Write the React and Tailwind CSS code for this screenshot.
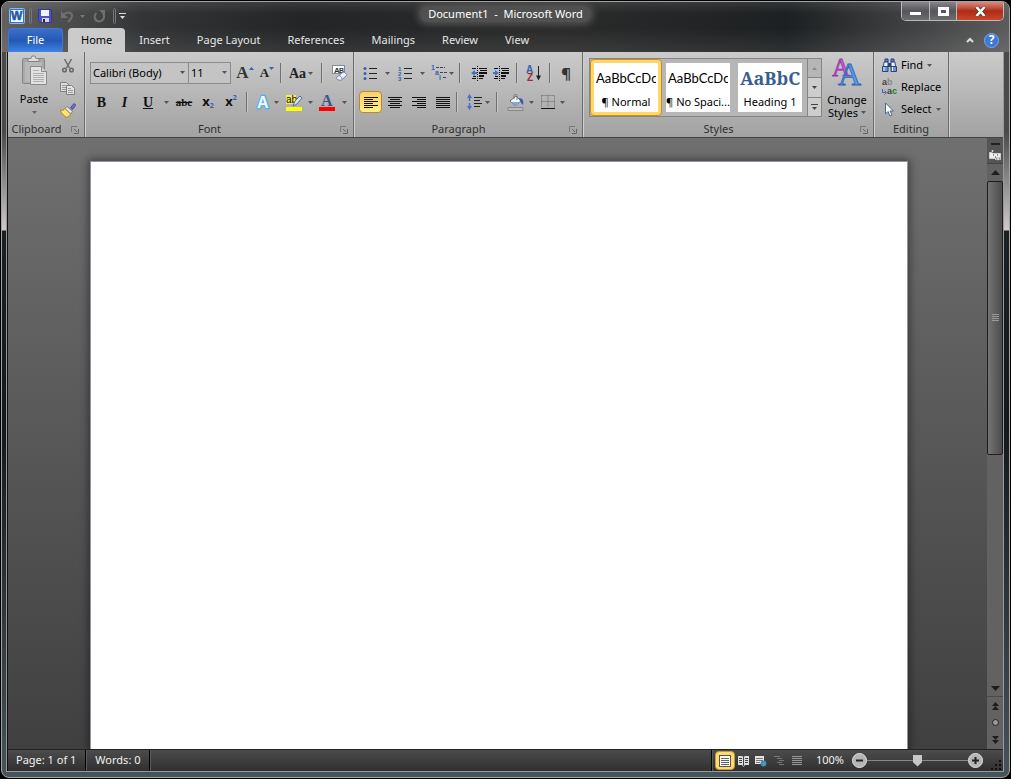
import { useState } from 'react';

const TABS = ['Home', 'Insert', 'Page Layout', 'References', 'Mailings', 'Review', 'View'];

function Caret({ className = '' }) {
  return (
    <svg viewBox="0 0 5 3" className={`h-[3px] w-[5px] shrink-0 ${className}`} aria-hidden="true">
      <path d="M0 0h5L2.5 3z" fill="currentColor" />
    </svg>
  );
}

function Sep({ className = '' }) {
  return <span className={`h-5 w-0.5 shrink-0 border-l border-[#6f6f6f] border-r border-r-[#c9c9c9] ${className}`} />;
}

function Tool({ label, className = '', children, ...rest }) {
  return (
    <button
      type="button"
      aria-label={label}
      title={label}
      className={`flex h-[22px] shrink-0 items-center justify-center rounded-sm hover:bg-[#ffe08a] ${className}`}
      {...rest}
    >
      {children}
    </button>
  );
}

function Icon({ w = 16, h = 16, children }) {
  return (
    <svg width={w} height={h} viewBox={`0 0 ${w} ${h}`} fill="none" className="shrink-0" aria-hidden="true">
      {children}
    </svg>
  );
}

function Group({ label, launcher = true, className = '', children }) {
  return (
    <section
      aria-label={label}
      className={`flex shrink-0 flex-col border-r border-[#6c6c6c] shadow-[1px_0_0_#cfcfcf] ${className}`}
    >
      <div className="flex-1">{children}</div>
      <div className="flex h-4 items-center text-[#2f2f2f]">
        <span className={`flex-1 text-center ${launcher ? 'pr-1.5' : ''}`}>{label}</span>
        {launcher ? (
          <button type="button" aria-label={`${label} options`} className="mr-[5px] mt-0.5">
            <Icon w={8} h={8}>
              <path d="M.5 6V.5H6" stroke="#777" />
              <path d="M3 3l3 3M7.5 3v4.5H3" stroke="#666" />
            </Icon>
          </button>
        ) : null}
      </div>
    </section>
  );
}

function Combo({ label, options, className }) {
  return (
    <div className={`relative shrink-0 ${className}`}>
      <select
        aria-label={label}
        className="h-[22px] w-full appearance-none border border-[#8b8b8b] bg-[#c4c4c4] pl-0.5 pr-3 text-[11px] text-black"
      >
        {options.map((item) => (
          <option key={item}>{item}</option>
        ))}
      </select>
      <Caret className="pointer-events-none absolute right-1 top-[9px] text-[#555]" />
    </div>
  );
}

function Lines({ rows, w = 14 }) {
  return (
    <Icon w={w} h={13}>
      {rows.map(([x, len], i) => (
        <path key={i} d={`M${x} ${i * 2 + 1.5}h${len}`} stroke="#111" />
      ))}
    </Icon>
  );
}

function IndentIcon({ out }) {
  return (
    <Icon w={16} h={15}>
      <path d="M1 2.5h4M8 2.500h8M9 4.500h7M1 12.500h4M8 12.500h4M2 10.500h3" stroke="#111" />
      <path d="M8 7h8M8 10h5" stroke="#111" strokeWidth="2" />
      <path d="M6.500 0v15" stroke="#111" strokeDasharray="1 1" />
      <path d={out ? 'M0 7l4-3v2h2v2H4v2z' : 'M6 7L2 4v2H0v2h2v2z'} fill="#3b74cf" />
    </Icon>
  );
}

function Clipboard() {
  return (
    <Group label="Clipboard" className="w-[77px]">
      <div className="flex pt-[3px]">
        <button type="button" className="flex w-[52px] flex-col items-center text-black">
          <Icon w={27} h={32}>
            <rect x="1.5" y="3.5" width="22" height="25" rx="1" fill="#a9a9a9" stroke="#868686" />
            <path d="M4 7h17v20H4z" fill="#b9b9b9" />
            <path d="M7 6.5V3.5h3L11 1h3l1 2.500h3v3z" fill="#dcdcdc" stroke="#858585" />
            <path d="M9.500 11.500h11l5 5v13h-16z" fill="#e2e2e2" stroke="#8a8a8a" />
            <path d="M20.500 11.500v5h5" fill="#cfcfcf" stroke="#8a8a8a" />
            <path d="M12 15.500h6M12 18.500h11M12 20.500h11M12 22.500h11M12 24.500h11M12 26.500h11" stroke="#b0b0b0" />
          </Icon>
          <span className="mt-1 leading-4">Paste</span>
          <Caret className="mt-1 text-[#666]" />
        </button>
        <div className="flex flex-col">
          <Tool label="Cut" className="w-4">
            <Icon w={12} h={14}>
              <path d="M2.500 0l5 9M9.500 0l-5 9" stroke="#6c6c6c" strokeWidth="1.500" />
              <circle cx="2.500" cy="11" r="1.800" stroke="#666" strokeWidth="1.500" />
              <circle cx="9.500" cy="11" r="1.800" stroke="#666" strokeWidth="1.500" />
            </Icon>
          </Tool>
          <Tool label="Copy" className="w-4">
            <Icon w={16} h={13}>
              <path d="M.5.5h6l3 3v6h-9z" fill="#ddd" stroke="#808080" />
              <path d="M2 3.500h4M2 5.500h5M2 7.500h4" stroke="#999" />
              <path d="M6.500 3.500h5l3 3v6h-8z" fill="#e4e4e4" stroke="#808080" />
              <path d="M8 6.500h3M8 8.500h5M8 10.500h5" stroke="#999" />
            </Icon>
          </Tool>
          <Tool label="Format Painter" className="w-4">
            <Icon w={16} h={15}>
              <path d="M10.500 5L13 1.500c1-1.500 3-.5 2.500 1L12.500 6.500z" fill="#6a6cd8" stroke="#3f3f93" strokeWidth=".8" />
              <path d="M7 3.500l5.500 5-2 2.500L5 5.500z" fill="#e8e8e8" stroke="#666" strokeWidth=".8" />
              <path d="M5 5.500C4 7 2 7.500 0 7.500c2 3 4 6 7 7 2-1 3-2 3.500-3.500z" fill="#f5dc5a" stroke="#9d7d1c" strokeWidth=".8" />
              <path d="M2.500 8.500l4.500 4M5 7.500l4 4" stroke="#fff6b5" />
            </Icon>
          </Tool>
        </div>
      </div>
    </Group>
  );
}

function FontGroup() {
  return (
    <Group label="Font" className="w-[269px]">
      <div className="mt-2.5 flex h-[22px] items-center pl-[5px]">
        <Combo label="Font" options={['Calibri (Body)', 'Cambria', 'Arial']} className="w-[99px]" />
        <Combo label="Font Size" options={['11', '12', '14']} className="-ml-px w-[43px]" />
        <Tool label="Grow Font" className="ml-[3px] w-[22px] font-['Liberation_Serif'] text-[17px] font-bold text-[#333]">
          A
          <Caret className="mb-2.5 rotate-180 text-[#2f62b5]" />
        </Tool>
        <Tool label="Shrink Font" className="w-[22px] font-['Liberation_Serif'] text-[13px] font-bold text-[#222]">
          A
          <Caret className="mb-2.5 text-[#2f62b5]" />
        </Tool>
        <Sep className="ml-0.5 mr-[3px]" />
        <Tool label="Change Case" className="w-8 gap-0.5 font-['Liberation_Serif'] text-[14px] font-bold text-[#222]">
          Aa
          <Caret className="text-[#555]" />
        </Tool>
        <Sep className="mx-1" />
        <Tool label="Clear Formatting" className="w-6">
          <Icon w={17} h={16}>
            <rect x="1.500" y=".5" width="12" height="8" fill="#fff" stroke="#7c8ba3" />
            <text x="3" y="7.500" fontSize="8" fontWeight="bold" fill="#333" fontFamily="Liberation Sans">A</text>
            <text x="8" y="7.500" fontSize="7" fontWeight="bold" fill="#333" fontFamily="Liberation Sans">B</text>
            <path d="M5.500 12.500l6-5c1-1 5 1 4 3l-5 4.500c-2 1-6-1-5-2.500z" fill="#eef1fb" stroke="#7082a8" />
            <path d="M8 10.500c1 0 3 1.500 3 3.500" stroke="#7082a8" />
          </Icon>
        </Tool>
      </div>
      <div className="mt-[7px] flex h-[22px] items-center pl-[5px] text-[#111]">
        <Tool label="Bold" className="w-[23px] font-['Liberation_Serif'] text-[14px] font-bold">B</Tool>
        <Tool label="Italic" className="w-[23px] font-['Liberation_Serif'] text-[14px] font-bold italic">I</Tool>
        <Tool label="Underline" className="w-6 font-['Liberation_Serif'] text-[14px] font-bold underline">U</Tool>
        <Tool label="Underline Style" className="w-3 text-[#555]">
          <Caret />
        </Tool>
        <Tool label="Strikethrough" className="w-6 font-['Liberation_Serif'] text-[11px] font-bold line-through">abc</Tool>
        <Tool label="Subscript" className="w-6 text-[13px] font-bold">
          x<span className="mt-2 text-[7px] text-[#2f62b5]">2</span>
        </Tool>
        <Tool label="Superscript" className="w-[22px] text-[13px] font-bold">
          x<span className="mb-2 text-[7px] text-[#2f62b5]">2</span>
        </Tool>
        <Sep className="ml-1 mr-[7px]" />
        <Tool label="Text Effects" className="w-6 gap-1">
          <Icon w={14} h={16}>
            <text
              x="1"
              y="14"
              fontSize="16"
              fontWeight="bold"
              fontFamily="Liberation Sans"
              fill="#eefaff"
              stroke="#5fb0e2"
              strokeWidth="3"
              strokeLinejoin="round"
              paintOrder="stroke"
            >
              A
            </text>
          </Icon>
          <Caret className="text-[#555]" />
        </Tool>
        <Tool label="Text Highlight Color" className="ml-1 w-8 gap-[5px]">
          <Icon w={17} h={17}>
            <path d="M0 1h10v9H0z" fill="#f4ec58" />
            <path d="M0 13h16v4H0z" fill="#ff0" />
            <text x="0" y="9" fontSize="10" fill="#111" fontFamily="Liberation Sans">ab</text>
            <path d="M7 12l2-5 5-5 2 2-5 6z" fill="#d6e0f4" stroke="#5a6c92" />
          </Icon>
          <Caret className="text-[#555]" />
        </Tool>
        <Tool label="Font Color" className="ml-1 w-7 gap-[7px]">
          <Icon w={16} h={17}>
            <path d="M0 13h16v4H0z" fill="#f00" />
            <text x="2" y="12" fontSize="16" fontWeight="bold" fill="#35568f" fontFamily="Liberation Serif">A</text>
          </Icon>
          <Caret className="text-[#555]" />
        </Tool>
      </div>
    </Group>
  );
}

function Paragraph() {
  const [align, setAlign] = useState('Align Left');
  const aligns = [
    ['Align Left', [[0, 14], [0, 9], [0, 14], [0, 9], [0, 14], [0, 9]]],
    ['Center', [[0, 14], [2, 10], [0, 14], [2, 10], [0, 14], [2, 10]]],
    ['Align Right', [[0, 14], [5, 9], [0, 14], [5, 9], [0, 14], [5, 9]]],
    ['Justify', [[0, 14], [0, 14], [0, 14], [0, 14], [0, 14], [0, 14]]],
  ];
  return (
    <Group label="Paragraph" className="w-[229px]">
      <div className="mt-2.5 flex h-[22px] items-center pl-[5px]">
        <Tool label="Bullets" className="w-[35px] gap-[7px]">
          <Icon w={15} h={14}>
            <circle cx="2" cy="2.500" r="1.500" fill="#2f62b5" />
            <circle cx="2" cy="7.500" r="1.500" fill="#2f62b5" />
            <circle cx="2" cy="12.500" r="1.500" fill="#2f62b5" />
            <path d="M6 2.500h8M6 7.500h8M6 12.500h8" stroke="#222" />
          </Icon>
          <Caret className="text-[#555]" />
        </Tool>
        <Tool label="Numbering" className="w-[35px] gap-[7px]">
          <Icon w={15} h={15}>
            <g fontSize="6" fontWeight="bold" fill="#2f62b5" fontFamily="Liberation Sans">
              <text x="0" y="5">1</text>
              <text x="0" y="10">2</text>
              <text x="0" y="15">3</text>
            </g>
            <path d="M6 2.500h8M6 7.500h8M6 12.500h8" stroke="#222" />
          </Icon>
          <Caret className="text-[#555]" />
        </Tool>
        <Tool label="Multilevel List" className="w-[26px]">
          <Icon w={18} h={16}>
            <g fontSize="7" fontWeight="bold" fill="#2f62b5" fontFamily="Liberation Sans">
              <text x="0" y="5">1</text>
              <text x="4" y="10">a</text>
              <text x="8" y="15">i</text>
            </g>
            <path d="M5 2.500h9M9 7.500h8M12 12.500h4" stroke="#444" strokeDasharray="3 1" />
          </Icon>
          <Caret className="text-[#555]" />
        </Tool>
        <Sep className="ml-1 mr-[7px]" />
        <Tool label="Decrease Indent" className="w-[22px]">
          <IndentIcon out />
        </Tool>
        <Tool label="Increase Indent" className="w-[22px]">
          <IndentIcon />
        </Tool>
        <Sep className="mx-1" />
        <Tool label="Sort" className="w-6">
          <Icon w={16} h={17}>
            <g fontSize="10" fontWeight="bold" fontFamily="Liberation Sans">
              <text x="0" y="8" fill="#2f62b5">A</text>
              <text x="1" y="16" fill="#a02c2c">Z</text>
            </g>
            <path d="M12.500 1v12" stroke="#222" />
            <path d="M10 10.500h5l-2.500 5z" fill="#222" />
          </Icon>
        </Tool>
        <Sep className="ml-[3px] mr-1" />
        <Tool label="Show/Hide ¶" className="w-[22px] text-[15px] font-bold text-[#333]">¶</Tool>
      </div>
      <div className="mt-[7px] flex h-[22px] items-center gap-px pl-[5px]">
        {aligns.map(([name, rows]) => (
          <Tool
            key={name}
            label={name}
            aria-pressed={align === name}
            onClick={() => setAlign(name)}
            className={`w-[23px] border ${
              align === name
                ? 'border-[#b98a2c] bg-linear-to-b from-[#fbd06a] to-[#fff08a]'
                : 'border-transparent'
            }`}
          >
            <Lines rows={rows} />
          </Tool>
        ))}
        <Sep className="ml-px mr-[7px]" />
        <Tool label="Line Spacing" className="w-6 gap-0.5">
          <Icon w={16} h={16}>
            <path d="M2.500 2v5M2.500 9v5" stroke="#3b74cf" strokeWidth="1.500" />
            <path d="M0 4l2.500-4L5 4zM0 12l2.500 4L5 12z" fill="#3b74cf" />
            <path d="M7 3.500h8M7 6.500h6M7 9.500h8M7 12.500h6" stroke="#222" />
          </Icon>
          <Caret className="text-[#555]" />
        </Tool>
        <Sep className="ml-[5px] mr-[7px]" />
        <Tool label="Shading" className="w-[29px] gap-1">
          <Icon w={18} h={17}>
            <path d="M1 13.500h15v3H1z" fill="#bbb" stroke="#888" />
            <path d="M3 7l6-5 5 5-6 5z" fill="#f3f6fb" stroke="#5f6f8f" />
            <path d="M4 8h9l-5 4z" fill="#8fa6d2" />
            <path d="M7 5V1.500C7 0 10 0 10 1.500V6" stroke="#777" />
            <path d="M12 4c4 0 5 3 4 7-2-1-2-3-3-4z" fill="#2f62b5" />
          </Icon>
          <Caret className="text-[#555]" />
        </Tool>
        <Tool label="Borders" className="ml-0.5 w-[29px] gap-[5px]">
          <Icon w={14} h={14}>
            <path d="M.5.5h13v12M.5.500v12M7 .5v12M.5 6.500h13" stroke="#666" strokeDasharray="1 1" />
            <path d="M0 13.500h14" stroke="#111" />
          </Icon>
          <Caret className="text-[#555]" />
        </Tool>
      </div>
    </Group>
  );
}

const STYLES = [
  { name: '¶ Normal', sample: 'AaBbCcDc', font: "font-['Lato'] text-[13px] text-black" },
  { name: '¶ No Spaci...', sample: 'AaBbCcDc', font: "font-['Lato'] text-[13px] text-black" },
  { name: 'Heading 1', sample: 'AaBbCc', font: "font-['Noto_Serif','Liberation_Serif'] text-[18px] font-bold text-[#365f91]" },
];

function Styles() {
  const [current, setCurrent] = useState(0);
  return (
    <Group label="Styles" className="w-[291px]">
      <div className="flex pl-1.5 pt-1.5">
        <div className="flex h-[59px] border border-[#858585] bg-[#b6b6b6]">
          {STYLES.map((style, i) => (
            <button
              key={style.name}
              type="button"
              onClick={() => setCurrent(i)}
              className={`h-[57px] w-[72px] rounded-sm border p-[3px] ${
                current === i ? 'border-[#c0922f] bg-[#ffd766]' : 'border-transparent'
              }`}
            >
              <span className="flex h-full flex-col items-center overflow-hidden bg-white px-0.5 text-black">
                <span className={`flex h-[31px] w-full items-center overflow-hidden whitespace-nowrap ${style.font}`}>
                  {style.sample}
                </span>
                <span className="whitespace-nowrap leading-4">{style.name}</span>
              </span>
            </button>
          ))}
          <div className="ml-px flex w-[14px] flex-col border-l border-[#858585] text-[#444]">
            <button type="button" aria-label="Previous styles" className="flex flex-1 items-center justify-center text-[#888]">
              <Caret className="rotate-180" />
            </button>
            <button type="button" aria-label="Next styles" className="flex flex-1 items-center justify-center border-t border-[#858585] bg-[#cdcdcd]">
              <Caret />
            </button>
            <button type="button" aria-label="More styles" className="flex flex-1 flex-col items-center justify-center gap-0.5 border-t border-[#858585] bg-[#cdcdcd]">
              <span className="h-px w-[7px] bg-[#444]" />
              <Caret />
            </button>
          </div>
        </div>
        <button type="button" className="flex w-[50px] flex-col items-center text-black">
          <Icon w={30} h={28}>
            <text x="0" y="18" fontSize="25" fill="#c65fce" stroke="#963aa6" strokeWidth=".8" fontFamily="Liberation Serif">A</text>
            <text x="6" y="27" fontSize="32" fill="#5b9bee" stroke="#2f62b5" strokeWidth=".8" fontFamily="Liberation Serif">A</text>
          </Icon>
          <span className="mt-[7px] leading-[13px]">Change</span>
          <span className="flex items-center gap-[3px] leading-[13px]">
            Styles
            <Caret className="text-[#555]" />
          </span>
        </button>
      </div>
    </Group>
  );
}

function Editing() {
  return (
    <Group label="Editing" launcher={false} className="w-[75px]">
      <div className="flex flex-col items-start pl-2 pt-0.5 text-black">
        <button type="button" className="flex h-[22px] items-center gap-1">
          <Icon w={15} h={15}>
            <path d="M3 1h3v3H3zM9 1h3v3H9z" fill="#5f84bd" stroke="#27457c" />
            <path d="M2 4h4v5H1.500zM9 4h4l.5 5H9z" fill="#f0f5fc" stroke="#27457c" />
            <path d="M.5 8.500h5.500v5H.5zM9 8.500h5.500v5H9z" fill="#6d92cd" stroke="#27457c" />
            <path d="M2 9v4M10.500 9v4" stroke="#e8f0fb" />
            <path d="M6 5h3v4H6z" fill="#27457c" />
          </Icon>
          Find
          <Caret className="text-[#555]" />
        </button>
        <button type="button" className="flex h-[22px] items-center gap-[3px]">
          <span className="flex w-4 flex-col font-['Liberation_Sans'] text-[9px] font-bold leading-[9px]">
            <span className="text-left text-[#444]">
              a<span className="text-[#888]">b</span>
            </span>
            <span className="flex items-center text-[#444]">
              <Icon w={5} h={6}>
                <path d="M.5 0v3.500h3M2.500 1.500l2 2-2 2" stroke="#2f62b5" />
              </Icon>
              a<span className="text-[#12862a]">c</span>
            </span>
          </span>
          Replace
        </button>
        <button type="button" className="flex h-[22px] items-center gap-1">
          <Icon w={15} h={15}>
            <path d="M3.500 1v11l2.500-2.500L8 14l2-1-2-4h3.500z" fill="#fff" stroke="#4a6494" />
          </Icon>
          Select
          <Caret className="text-[#555]" />
        </button>
      </div>
    </Group>
  );
}

function TitleBar() {
  return (
    <div className="grid h-[26px] grid-cols-[1fr_auto_1fr]">
      <div className="flex items-center pl-[7px] pt-0.5">
        <Icon w={16} h={16}>
          <rect x=".5" y=".5" width="15" height="15" rx="1" fill="#2f74c8" stroke="#8db8ea" />
          <path d="M2 2h12v12H2z" fill="#fff" />
          <text x="2" y="12" fontSize="12" fontWeight="bold" fill="#1b5bb0" stroke="#1b5bb0" strokeWidth=".6" fontFamily="Liberation Sans">W</text>
        </Icon>
        <span className="ml-1 h-4 w-[3px] rounded-sm border border-[#777]" />
        <button type="button" aria-label="Save" className="ml-1.5">
          <Icon w={14} h={14}>
            <path d="M.5.5h13v13h-11l-2-2z" fill="#5152c4" stroke="#3334a0" />
            <path d="M3 1h8v6H3z" fill="#f2f4fb" />
            <path d="M4 9h7v4H4z" fill="#d6d8e6" />
            <path d="M5 10h2v3H5z" fill="#22235c" />
          </Icon>
        </button>
        <button type="button" aria-label="Undo" className="ml-[9px] flex items-center gap-1.5 text-[#777]">
          <Icon w={13} h={13}>
            <path d="M2 5c4-4 9-3 9 1 0 2-2 4-4 6" stroke="#707070" strokeWidth="2" />
            <path d="M0 1v7h7z" fill="#707070" />
          </Icon>
          <Caret />
        </button>
        <button type="button" aria-label="Repeat" className="ml-2">
          <Icon w={13} h={13}>
            <path d="M3.500 3C0 6 2 11.500 6 11.500S12.500 7 10 4" stroke="#707070" strokeWidth="2" />
            <path d="M6 0h6v6z" fill="#707070" />
          </Icon>
        </button>
        <span className="ml-[7px] h-4 w-[3px] rounded-sm border border-[#777]" />
        <button type="button" aria-label="Customize Quick Access Toolbar" className="ml-[3px] flex flex-col items-center gap-0.5 text-[#ddd]">
          <span className="h-px w-[7px] bg-current" />
          <Caret />
        </button>
      </div>
      <h1 className="mt-1 h-4 whitespace-pre rounded-full bg-[#505050] px-2 text-[11px] leading-4 text-white shadow-[0_0_6px_3px_#505050]">
        Document1  -  Microsoft Word
      </h1>
      <div className="mr-[5px] flex h-[19px] justify-self-end overflow-hidden rounded-b-[5px] border border-t-0 border-[#b9b9b9]">
        <button type="button" aria-label="Minimize" className="flex w-7 items-center justify-center border-r border-[#b9b9b9] bg-linear-to-b from-[#85858b] via-[#55555a] to-[#6e6e70]">
          <span className="mt-1 h-[3px] w-[11px] bg-white" />
        </button>
        <button type="button" aria-label="Maximize" className="flex w-[27px] items-center justify-center border-r border-[#b9b9b9] bg-linear-to-b from-[#85858b] via-[#55555a] to-[#6e6e70]">
          <span className="h-[9px] w-[11px] border-[3px] border-white" />
        </button>
        <button type="button" aria-label="Close" className="flex w-[46px] items-center justify-center bg-linear-to-b from-[#d58c80] via-[#b02a14] to-[#c8472c]">
          <Icon w={11} h={9}>
            <path d="M1.500 0l8 9M9.500 0l-8 9" stroke="#442" strokeWidth="4" />
            <path d="M1.500 0l8 9M9.500 0l-8 9" stroke="#fff" strokeWidth="2.500" />
          </Icon>
        </button>
      </div>
    </div>
  );
}

function TabStrip() {
  const [tab, setTab] = useState('Home');
  return (
    <nav className="flex h-6 items-stretch pl-1.5 text-[#e6e6e6]">
      <button type="button" className="w-[55px] rounded-t-sm border border-b-0 border-[#3f76cf] bg-linear-to-b from-[#3a70cb] via-[#2458b6] to-[#3f83e4] text-white">
        File
      </button>
      <div role="tablist" className="ml-[5px] flex">
        {TABS.map((name) => (
          <button
            key={name}
            type="button"
            role="tab"
            aria-selected={tab === name}
            onClick={() => setTab(name)}
            className={`rounded-t-sm px-[13px] ${
              tab === name ? 'bg-[#cbcbcb] text-black' : 'ml-px hover:bg-[#555]'
            }`}
          >
            {name}
          </button>
        ))}
      </div>
      <div className="ml-auto flex items-center gap-2.5 pr-2.5">
        <button type="button" aria-label="Minimize the Ribbon">
          <Icon w={8} h={6}>
            <path d="M1 5l3-3 3 3" stroke="#ddd" strokeWidth="2" />
          </Icon>
        </button>
        <button
          type="button"
          aria-label="Help"
          className="flex size-[15px] items-center justify-center rounded-full border border-[#7aa8ee] bg-[#3d78d6] text-[12px] font-bold text-white"
        >
          ?
        </button>
      </div>
    </nav>
  );
}

function ScrollBar() {
  return (
    <div className="flex w-4 shrink-0 flex-col bg-[#626262] text-[#222]">
      <div className="flex h-[26px] flex-col items-center gap-[5px] border-b border-[#444] bg-[#555] pt-[5px]">
        <span className="h-0.5 w-[9px] shrink-0 bg-[#222]" />
        <button type="button" aria-label="View Ruler">
          <Icon w={12} h={11}>
            <path d="M.5 2.500h3l1 1h7v6h-5l-1-1h-5z" fill="#eee" stroke="#ccc" />
            <path d="M2 0h3L3.500 3zM7 8h4l-2 3z" fill="#fff" stroke="#444" strokeWidth=".5" />
            <path d="M4 5h1M8 5h1M6 7h1" stroke="#333" />
          </Icon>
        </button>
      </div>
      <button type="button" aria-label="Scroll up" className="flex h-[17px] shrink-0 items-center justify-center">
        <Icon w={9} h={5}>
          <path d="M0 5h9L4.500 0z" fill="#1d1d1d" />
        </Icon>
      </button>
      <div className="flex min-h-0 flex-1 flex-col">
        <div className="flex h-[55%] items-center justify-center rounded-xs border border-[#1e1e1e] bg-linear-to-r from-[#747474] to-[#4c4c4c]">
          <Icon w={7} h={8}>
            <path d="M0 .5h7M0 2.500h7M0 4.500h7M0 6.500h7" stroke="#999" />
          </Icon>
        </div>
      </div>
      <button type="button" aria-label="Scroll down" className="flex h-[17px] shrink-0 items-center justify-center border-b border-[#4a4a4a]">
        <Icon w={9} h={5}>
          <path d="M0 0h9L4.500 5z" fill="#1d1d1d" />
        </Icon>
      </button>
      <button type="button" aria-label="Previous Page" className="flex h-[17px] shrink-0 items-center justify-center">
        <Icon w={7} h={8}>
          <path d="M0 4h7L3.500 0zM0 8h7L3.500 4z" fill="#1d1d1d" />
        </Icon>
      </button>
      <button type="button" aria-label="Select Browse Object" className="flex h-[17px] shrink-0 items-center justify-center">
        <span className="size-[7px] rounded-full border border-[#222] bg-[#999]" />
      </button>
      <button type="button" aria-label="Next Page" className="flex h-[18px] shrink-0 items-center justify-center">
        <Icon w={7} h={8}>
          <path d="M0 0h7L3.500 4zM0 4h7L3.500 8z" fill="#1d1d1d" />
        </Icon>
      </button>
    </div>
  );
}

function StatusSep({ className = '' }) {
  return <span className={`h-full w-0.5 shrink-0 border-l border-l-black border-r border-r-[#5a5a5a] ${className}`} />;
}

function StatusBar() {
  const [zoom, setZoom] = useState(100);
  return (
    <footer className="flex h-[22px] shrink-0 items-center border-t border-[#222] bg-linear-to-b from-[#4c4c4c] to-[#303030] pl-2 text-[#f0f0f0]">
      <button type="button">Page: 1 of 1</button>
      <StatusSep className="ml-[9px] mr-2" />
      <button type="button">Words: 0</button>
      <StatusSep className="mx-[9px]" />
      <StatusSep className="ml-auto mr-0.5" />
      <button type="button" aria-label="Print Layout" aria-pressed="true" className="flex h-[19px] w-5 items-center justify-center rounded-sm border border-[#c69a35] bg-[#ffdb6b]">
        <Icon w={12} h={12}>
          <rect x=".5" y=".5" width="11" height="11" fill="#fff" stroke="#555" />
          <path d="M2 3.500h8M2 5.500h8M2 7.500h8M2 9.500h8" stroke="#666" />
        </Icon>
      </button>
      <button type="button" aria-label="Full Screen Reading" className="flex w-[17px] justify-center">
        <Icon w={11} h={12}>
          <path d="M0 1h4l1.500 1L7 1h4v9H7l-1.500 2L4 10H0z" fill="#ddd" />
          <path d="M1 3.500h3M1 5.500h3M1 7.500h3M7 3.500h3M7 5.500h3M7 7.500h3M5.500 2v9" stroke="#444" />
        </Icon>
      </button>
      <button type="button" aria-label="Web Layout" className="flex w-[18px] justify-center">
        <Icon w={12} h={12}>
          <path d="M0 1h9v8H0z" fill="#e6e6e6" />
          <path d="M1 3.500h7M1 5.500h7M1 7.500h4" stroke="#777" />
          <circle cx="8.500" cy="8.500" r="3" fill="#3f84cf" />
          <path d="M7 8l2-1 1 2-1 2z" fill="#5fb255" />
        </Icon>
      </button>
      <button type="button" aria-label="Outline" className="flex w-[18px] justify-center">
        <Icon w={10} h={11}>
          <path d="M0 1.500h6M3 3.500h5M5 5.500h5M3 7.500h5M5 9.500h5" stroke="#777" />
        </Icon>
      </button>
      <button type="button" aria-label="Draft" className="flex w-[18px] justify-center">
        <Icon w={10} h={11}>
          <path d="M0 1.500h10M0 3.500h10M0 5.500h10M0 7.500h10M0 9.500h10" stroke="#999" />
        </Icon>
      </button>
      <button type="button" className="ml-2 w-[30px] text-right">
        {zoom}%
      </button>
      <button type="button" aria-label="Zoom Out" onClick={() => setZoom(Math.max(10, zoom - 10))} className="ml-2">
        <Icon w={15} h={15}>
          <circle cx="7.500" cy="7.500" r="7" fill="#b5b5b5" stroke="#e0e0e0" />
          <path d="M4 7.500h7" stroke="#222" strokeWidth="2" />
        </Icon>
      </button>
      <input
        type="range"
        aria-label="Zoom"
        min="10"
        max="190"
        value={zoom}
        onChange={(e) => setZoom(Number(e.target.value))}
        className="h-4 w-[101px] appearance-none bg-[linear-gradient(#888,#888)] bg-[length:100%_1px] bg-center bg-no-repeat [&::-webkit-slider-thumb]:h-3 [&::-webkit-slider-thumb]:w-[9px] [&::-webkit-slider-thumb]:appearance-none [&::-webkit-slider-thumb]:bg-[#c6c6c6] [&::-webkit-slider-thumb]:[clip-path:polygon(0_0,100%_0,100%_65%,50%_100%,0_65%)]"
      />
      <button type="button" aria-label="Zoom In" onClick={() => setZoom(Math.min(190, zoom + 10))}>
        <Icon w={15} h={15}>
          <circle cx="7.500" cy="7.500" r="7" fill="#b5b5b5" stroke="#e0e0e0" />
          <path d="M4 7.500h7M7.500 4v7" stroke="#222" strokeWidth="2" />
        </Icon>
      </button>
      <span className="ml-2 mr-px self-end">
        <Icon w={11} h={12}>
          <path d="M8 1h2v2H8zM4 5h2v2H4zM8 5h2v2H8zM0 9h2v2H0zM4 9h2v2H4zM8 9h2v2H8z" fill="#111" />
        </Icon>
      </span>
    </footer>
  );
}

export default function App() {
  return (
    <div className="h-screen bg-black p-px font-['Noto_Sans','Open_Sans',sans-serif] text-[11px]">
      <div className="flex h-full flex-col overflow-hidden rounded-lg border border-[#a3a3a3] bg-[linear-gradient(#4a4a4a_0,#4a4a4a_130px,#cfcaca_228px,#1b2024_229px,#15191c_55%,#46545b_100%)]">
        <header className="shrink-0 bg-[linear-gradient(180deg,#ffffff18_0,#ffffff00_12px,#ffffff00_26px,#ffffff14_100%),linear-gradient(90deg,#616161_0,#333435_14%,#232527_30%,#2b2b2b_55%,#1d2022_78%,#5c5c5c_100%)]">
          <TitleBar />
          <TabStrip />
        </header>
        <div className="mb-[5px] ml-1 mr-[5px] flex min-h-0 flex-1 flex-col border-x border-b border-[#999]">
          <div className="flex min-h-0 flex-1 flex-col border-l border-[#111] text-black">
            <div className="flex h-[86px] shrink-0 overflow-hidden border-b border-[#444] bg-linear-to-b from-[#cbcbcb] to-[#a2a2a2]">
              <Clipboard />
              <FontGroup />
              <Paragraph />
              <Styles />
              <Editing />
            </div>
            <div className="flex min-h-0 flex-1">
              <main className="flex flex-1 bg-linear-to-b from-[#707070] to-[#404040] pl-[3px] pt-[23px]">
                <div
                  contentEditable
                  suppressContentEditableWarning
                  role="textbox"
                  aria-label="Document"
                  className="mx-auto w-[818px] border border-b-0 border-[#8f95a3] bg-white shadow-[0_0_8px_2px_#0006] outline-none"
                />
              </main>
              <ScrollBar />
            </div>
            <StatusBar />
          </div>
        </div>
      </div>
    </div>
  );
}
